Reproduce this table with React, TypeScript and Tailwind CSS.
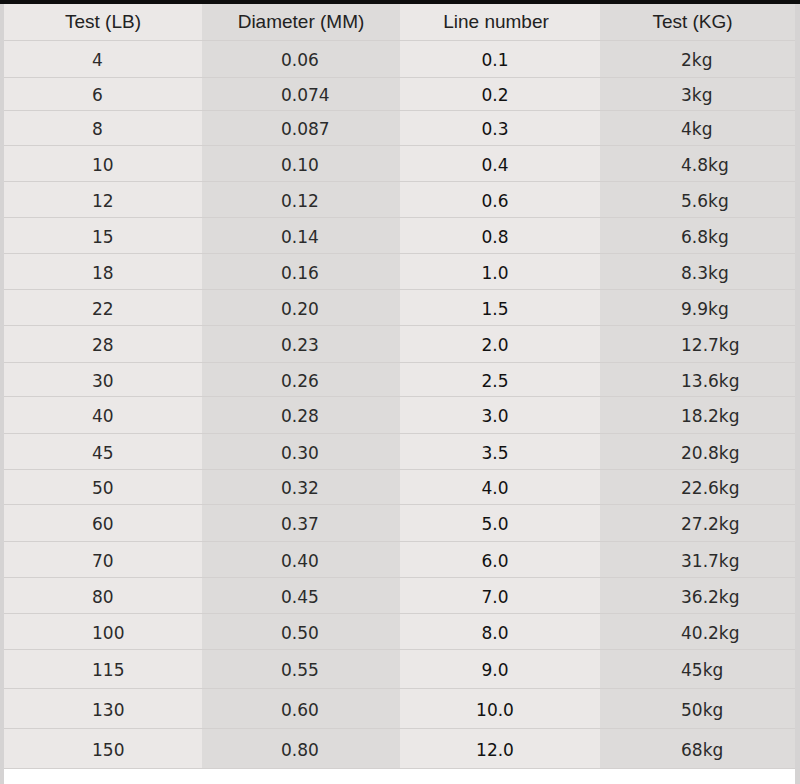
const rows: { lb: string; mm: string; line: string; kg: string; h: string }[] = [
  { lb: "4", mm: "0.06", line: "0.1", kg: "2kg", h: "h-[37px]" },
  { lb: "6", mm: "0.074", line: "0.2", kg: "3kg", h: "h-[33px]" },
  { lb: "8", mm: "0.087", line: "0.3", kg: "4kg", h: "h-[35px]" },
  { lb: "10", mm: "0.10", line: "0.4", kg: "4.8kg", h: "h-[36px]" },
  { lb: "12", mm: "0.12", line: "0.6", kg: "5.6kg", h: "h-[36px]" },
  { lb: "15", mm: "0.14", line: "0.8", kg: "6.8kg", h: "h-[36px]" },
  { lb: "18", mm: "0.16", line: "1.0", kg: "8.3kg", h: "h-[36px]" },
  { lb: "22", mm: "0.20", line: "1.5", kg: "9.9kg", h: "h-[36px]" },
  { lb: "28", mm: "0.23", line: "2.0", kg: "12.7kg", h: "h-[37px]" },
  { lb: "30", mm: "0.26", line: "2.5", kg: "13.6kg", h: "h-[34px]" },
  { lb: "40", mm: "0.28", line: "3.0", kg: "18.2kg", h: "h-[37px]" },
  { lb: "45", mm: "0.30", line: "3.5", kg: "20.8kg", h: "h-[36px]" },
  { lb: "50", mm: "0.32", line: "4.0", kg: "22.6kg", h: "h-[35px]" },
  { lb: "60", mm: "0.37", line: "5.0", kg: "27.2kg", h: "h-[37px]" },
  { lb: "70", mm: "0.40", line: "6.0", kg: "31.7kg", h: "h-[36px]" },
  { lb: "80", mm: "0.45", line: "7.0", kg: "36.2kg", h: "h-[36px]" },
  { lb: "100", mm: "0.50", line: "8.0", kg: "40.2kg", h: "h-[36px]" },
  { lb: "115", mm: "0.55", line: "9.0", kg: "45kg", h: "h-[39px]" },
  { lb: "130", mm: "0.60", line: "10.0", kg: "50kg", h: "h-[40px]" },
  { lb: "150", mm: "0.80", line: "12.0", kg: "68kg", h: "h-[40px]" },
];

const light = "bg-[#ebe8e7]";
const dark = "bg-[#dddbda]";
const num = "font-['DejaVu_Sans',sans-serif] text-[17px] text-[#2b2b2b]";

export default function App() {
  return (
    <div className="flex h-[784px] w-[800px] flex-col overflow-hidden bg-white">
      <div className="h-1 shrink-0 bg-[#0d0d0d]" />
      <div className="flex flex-1">
        <div className="w-1 bg-[#d5d3d3]" />
        <div className="flex w-[791px] flex-col">
          <div className="flex h-[37px] border-b border-[#d3d0cf] font-['Liberation_Sans',Arial,sans-serif] text-[19px] text-[#222]">
            <div className={`flex w-[198px] items-center justify-center ${light}`}>Test (LB)</div>
            <div className={`flex w-[198px] items-center justify-center ${dark}`}>Diameter (MM)</div>
            <div className={`flex w-[200px] items-center justify-center pr-2 ${light}`}>Line number</div>
            <div className={`flex w-[195px] items-center justify-center pr-[10px] ${dark}`}>Test (KG)</div>
          </div>
          {rows.map((r) => (
            <div key={r.lb} className={`flex ${r.h} border-b border-[#d3d0cf]`}>
              <div className={`flex w-[198px] items-center pt-1 pl-[88px] ${light} ${num}`}>{r.lb}</div>
              <div className={`flex w-[198px] items-center pt-1 pl-[79px] ${dark} ${num}`}>{r.mm}</div>
              <div className={`flex w-[200px] items-center justify-center pt-1 pr-[10px] ${light} ${num} text-[#111]`}>{r.line}</div>
              <div className={`flex w-[195px] items-center pt-1 pl-[81px] ${dark} ${num}`}>{r.kg}</div>
            </div>
          ))}
          <div className="flex-1 bg-white" />
        </div>
        <div className="w-[5px] bg-[#d5d3d3]" />
      </div>
    </div>
  );
}
